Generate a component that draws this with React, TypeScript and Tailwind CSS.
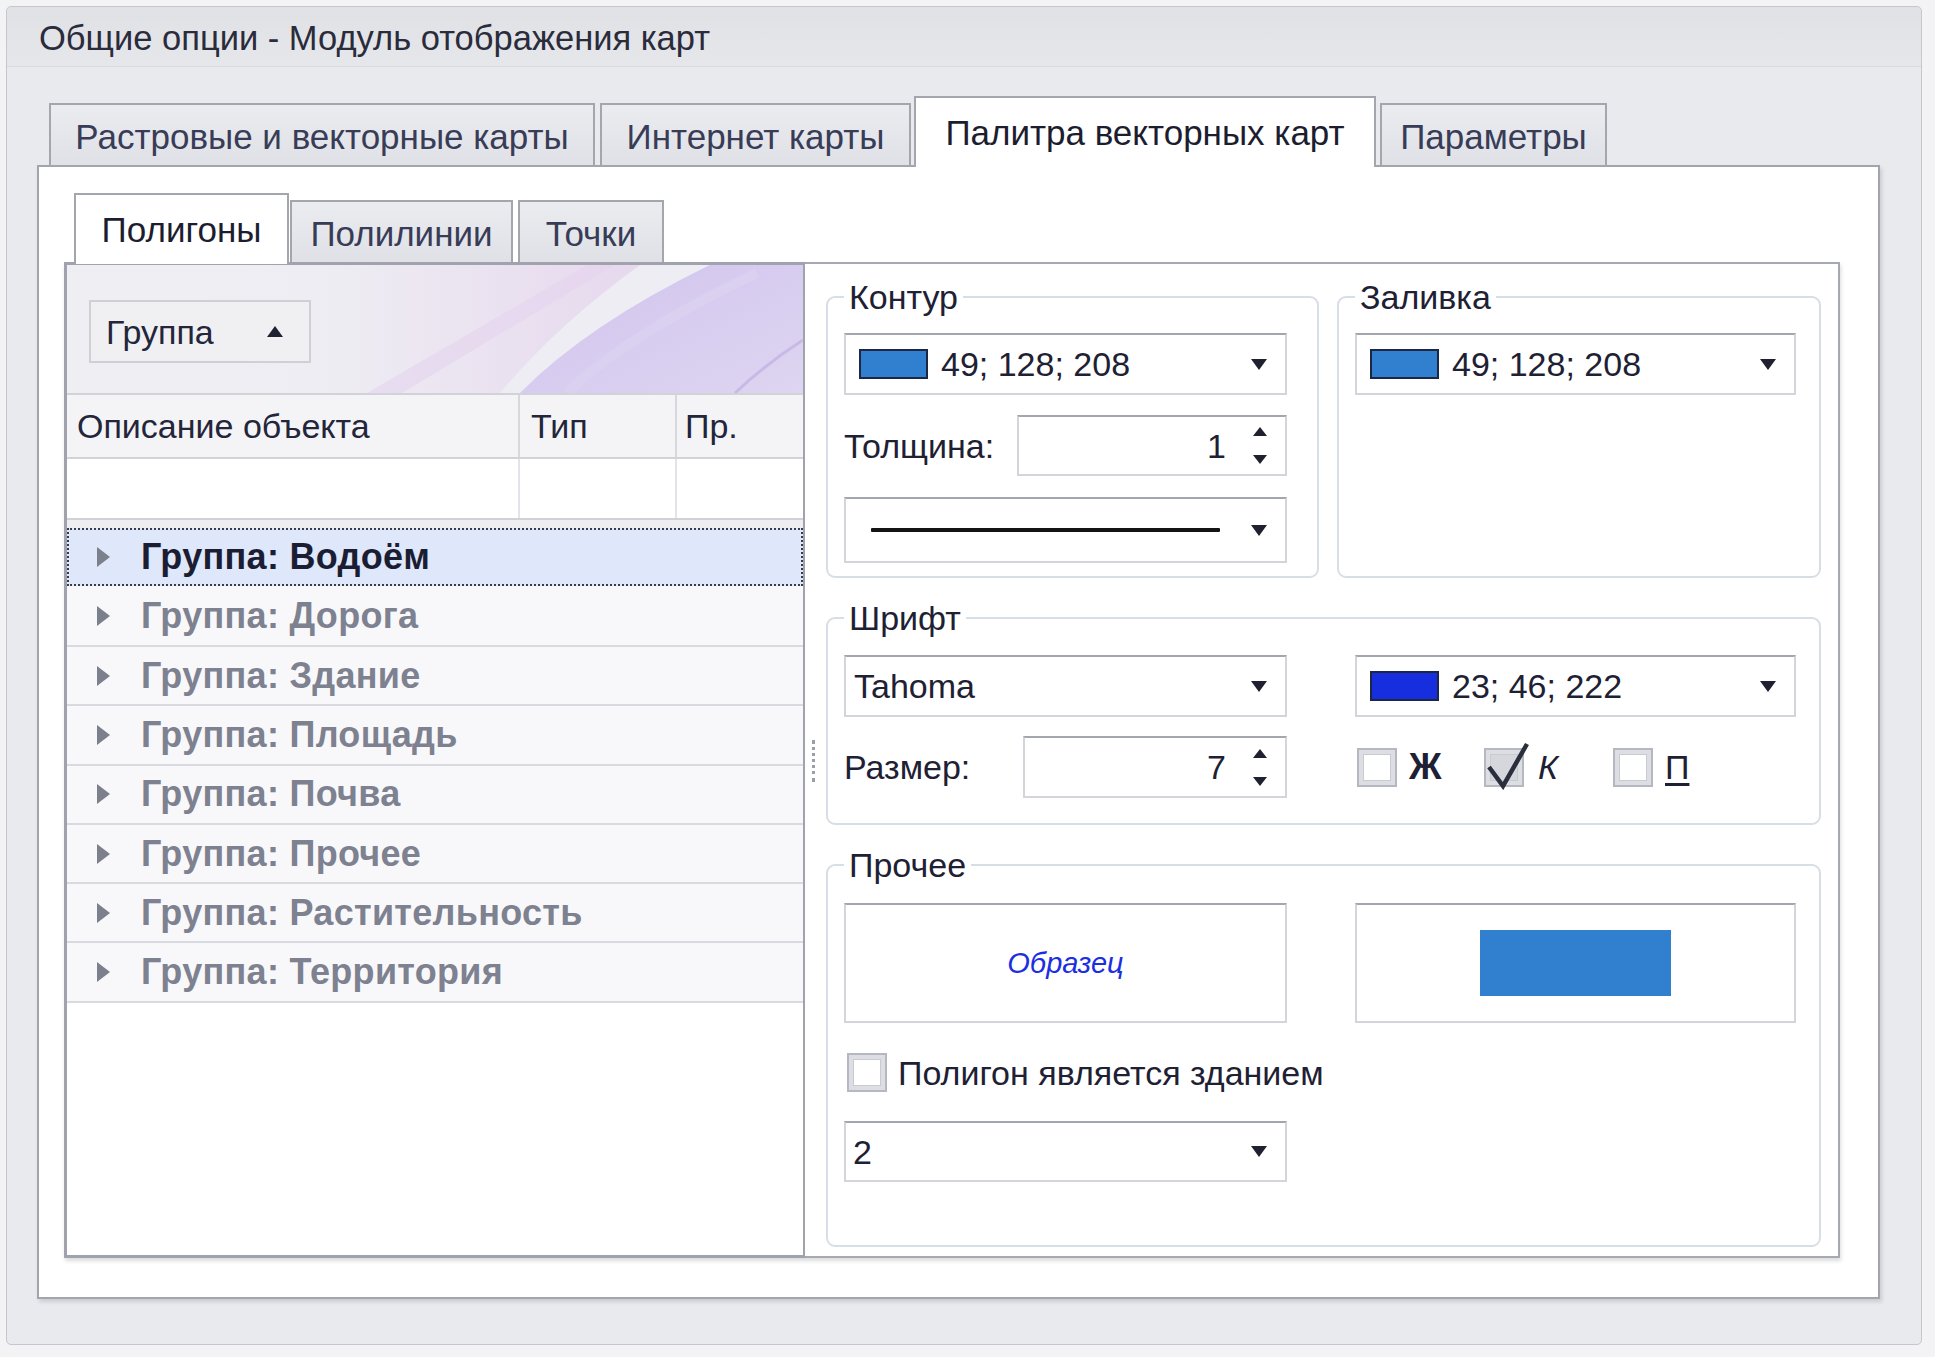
import React from 'react';

// Общие опции — Модуль отображения карт, вкладка «Палитра векторных карт»

const GROUPS = ['Водоём', 'Дорога', 'Здание', 'Площадь', 'Почва', 'Прочее', 'Растительность', 'Территория'];

const DropArrow = () => (
  <svg width="16" height="11" viewBox="0 0 16 11" className="block shrink-0">
    <path d="M0 0H16L8 11Z" fill="#1f2130" />
  </svg>
);

const SpinArrow: React.FC<{ up?: boolean }> = ({ up }) => (
  <svg width="14" height="9" viewBox="0 0 14 9" className="block">
    <path d={up ? 'M7 0L14 9H0Z' : 'M0 0H14L7 9Z'} fill="#1f2130" />
  </svg>
);

const Combo: React.FC<{ className: string; children?: React.ReactNode }> = ({ className, children }) => (
  <div className={`flex items-center border-2 border-[#d3d5db] border-t-[#a3a6ae] bg-white pr-[18px] ${className}`}>
    <div className="flex-1 flex items-center min-w-0">{children}</div>
    <DropArrow />
  </div>
);

const ColorValue: React.FC<{ swatch: string; text: string }> = ({ swatch, text }) => (
  <>
    <span className={`w-[69px] h-[30px] border-2 border-[#1c2745] ml-[13px] shrink-0 ${swatch}`} />
    <span className="ml-[13px]">{text}</span>
  </>
);

const Spin: React.FC<{ className: string; value: string }> = ({ className, value }) => (
  <div className={`flex items-center justify-end border-2 border-[#d3d5db] border-t-[#a3a6ae] bg-white ${className}`}>
    <span>{value}</span>
    <div className="flex flex-col gap-[19px] ml-[27px] mr-[18px]">
      <SpinArrow up />
      <SpinArrow />
    </div>
  </div>
);

const CheckBox: React.FC<{ checked?: boolean }> = ({ checked }) => (
  <div className="relative w-[40px] h-[39px] shrink-0 border-2 border-[#b5b8c0] bg-[#dcdee3] p-[4px]">
    <div className={`w-full h-full border border-[#c8cbd1] ${checked ? 'bg-[#d5d7dc]' : 'bg-white'}`} />
    {checked && (
      <svg width="48" height="50" viewBox="0 0 48 50" className="absolute left-[-2px] top-[-10px]">
        <path d="M5 27 L19 46 L43 4" stroke="#2b2e3d" strokeWidth="4.5" fill="none" strokeLinejoin="miter" />
      </svg>
    )}
  </div>
);

const Box: React.FC<{ className: string; children?: React.ReactNode }> = ({ className, children }) => (
  <div className={`flex items-center justify-center border-2 border-[#d3d5db] border-t-[#a3a6ae] bg-white ${className}`}>
    {children}
  </div>
);

const GroupBox: React.FC<{ title: string; className: string; children?: React.ReactNode }> = ({ title, className, children }) => (
  <fieldset className={`border-2 border-[#d7dee5] rounded-[9px] px-[16px] ${className}`}>
    <legend className="px-[5px] leading-[40px]">{title}</legend>
    {children}
  </fieldset>
);

const GroupPanelArt = () => (
  <svg width="736" height="128" viewBox="0 0 736 128" className="absolute inset-0">
    <defs>
      <linearGradient id="gp-base" x1="0" y1="0" x2="1" y2="0">
        <stop offset="0" stopColor="#efeff3" />
        <stop offset="0.35" stopColor="#eeedf3" />
        <stop offset="0.6" stopColor="#eae1f0" />
        <stop offset="0.8" stopColor="#e6d7ee" />
      </linearGradient>
      <linearGradient id="gp-purple" x1="0" y1="0" x2="1" y2="1">
        <stop offset="0" stopColor="#c9bbe8" />
        <stop offset="0.4" stopColor="#d6cbef" />
        <stop offset="1" stopColor="#ddd5f1" />
      </linearGradient>
    </defs>
    <rect width="736" height="128" fill="url(#gp-base)" />
    <path d="M300 128 L520 0 L548 0 L335 128Z" fill="#e5d4ee" opacity="0.6" />
    <path d="M433 128 Q490 60 573 0 L643 0 Q520 60 453 128 Z" fill="#ededf3" />
    <path d="M453 128 Q520 60 643 0 L736 0 L736 128 Z" fill="url(#gp-purple)" />
    <path d="M500 128 Q560 70 690 8" stroke="#dcd3f1" strokeWidth="10" fill="none" opacity="0.6" />
    <path d="M668 128 Q700 98 736 75" stroke="#c8b9e7" strokeWidth="3" fill="none" />
  </svg>
);

const tabIdle =
  'h-[62px] border-2 border-b-0 border-[#a4a6ae] bg-gradient-to-b from-[#ebecf0] to-[#e0e1e6] flex items-center justify-center pt-[3px] text-[#383c57] text-[35px]';

export default function App() {
  return (
    <div className="w-[1935px] h-[1357px] overflow-hidden bg-[#f3f3f5] pl-[6px] pt-[6px] font-['Liberation_Sans',Arial,sans-serif] text-[34px] leading-none text-[#1e2133]">
      <div className="w-[1916px] h-[1339px] rounded-[5px] border border-[#c6c7cd] bg-[#e9eaee] flex flex-col">
        {/* заголовок */}
        <div className="h-[60px] shrink-0 bg-gradient-to-b from-[#e0e1e5] to-[#e6e7eb] border-b border-[#d8d9de] flex items-center pl-[32px] pt-[4px] text-[34.5px] text-[#2a2c3b] rounded-t-[5px]">
          Общие опции - Модуль отображения карт
        </div>

        <div className="pl-[30px] pt-[29px]">
          {/* вкладки верхнего уровня */}
          <div className="flex items-end h-[69px]">
            <div className={`ml-[12px] w-[546px] ${tabIdle}`}>Растровые и векторные карты</div>
            <div className={`ml-[5px] w-[311px] ${tabIdle}`}>Интернет карты</div>
            <div className="relative z-10 ml-[3px] mb-[-2px] w-[462px] h-[71px] border-2 border-b-0 border-[#a4a6ae] bg-white flex items-center justify-center text-[35px] text-[#1c1e30]">
              Палитра векторных карт
            </div>
            <div className={`ml-[4px] w-[227px] ${tabIdle}`}>Параметры</div>
          </div>

          {/* содержимое вкладки */}
          <div className="w-[1843px] h-[1134px] border-2 border-[#a2a5ad] bg-white shadow-[2px_3px_4px_rgba(0,0,0,0.13)] pl-[25px] pt-[26px]">
            <div className="flex items-end h-[69px] pl-[10px]">
              <div className="relative z-10 w-[215px] h-[71px] mb-[-2px] border-2 border-b-0 border-[#a4a6ae] bg-white flex items-center justify-center text-[35px] text-[#1c1e30]">
                Полигоны
              </div>
              <div className={`ml-[1px] w-[223px] ${tabIdle}`}>Полилинии</div>
              <div className={`ml-[5px] w-[146px] ${tabIdle}`}>Точки</div>
            </div>

            <div className="flex w-[1776px] h-[996px] shadow-[1px_3px_4px_rgba(0,0,0,0.14)]">
              {/* таблица групп */}
              <div className="w-[741px] h-full border-[3px] border-r-2 border-[#a0a3ad] bg-white flex flex-col">
                <div className="relative h-[128px] shrink-0 overflow-hidden">
                  <GroupPanelArt />
                  <div className="relative ml-[22px] mt-[35px] w-[222px] h-[63px] border-2 border-[#cfd0d6] bg-[#f0f0f3] flex items-center pl-[15px] pr-[26px] text-[#23263a]">
                    <span className="flex-1">Группа</span>
                    <svg width="16" height="11" viewBox="0 0 16 11" className="block">
                      <path d="M8 0L16 11H0Z" fill="#1f2130" />
                    </svg>
                  </div>
                </div>
                <div className="h-[66px] shrink-0 flex border-y-2 border-[#d2d3d9] bg-[#f4f4f7] text-[#23263a]">
                  <div className="w-[453px] border-r-2 border-[#d7d8dd] flex items-center pl-[10px]">Описание объекта</div>
                  <div className="w-[157px] border-r-2 border-[#d7d8dd] flex items-center pl-[11px]">Тип</div>
                  <div className="flex-1 flex items-center pl-[8px]">Пр.</div>
                </div>
                <div className="h-[59px] shrink-0 flex">
                  <div className="w-[453px] border-r-2 border-[#e3e4e9]" />
                  <div className="w-[157px] border-r-2 border-[#e3e4e9]" />
                  <div className="flex-1" />
                </div>
                <div className="h-[10px] shrink-0 border-t-2 border-[#d0d1d7] bg-[#eeeef1]" />
                {GROUPS.map((g, i) =>
                  i === 0 ? (
                    <div key={g} className="h-[58px] shrink-0 flex items-center border-2 border-dotted border-[#3a3c48] bg-[#dfe7fb] font-bold text-[36px] tracking-[0.3px] text-[#1b1e33]">
                      <svg width="13" height="20" viewBox="0 0 13 20" className="block ml-[28px] mr-[31px]">
                        <path d="M0 0L13 10L0 20Z" fill="#7c808d" />
                      </svg>
                      <span>Группа: {g}</span>
                    </div>
                  ) : (
                    <div
                      key={g}
                      className={`${i === 1 ? 'h-[61px]' : 'h-[59.3px]'} shrink-0 flex items-center border-b-2 border-[#d9dadf] bg-[#f8f8fa] font-bold text-[36px] tracking-[0.3px] text-[#7d8190]`}
                    >
                      <svg width="13" height="20" viewBox="0 0 13 20" className="block ml-[30px] mr-[31px]">
                        <path d="M0 0L13 10L0 20Z" fill="#7c808d" />
                      </svg>
                      <span>Группа: {g}</span>
                    </div>
                  )
                )}
                <div className="flex-1" />
              </div>

              {/* свойства */}
              <div className="relative flex-1 h-full border-2 border-l-0 border-[#a6a9b1] bg-white pl-[21px] pt-[13px]">
                <div className="absolute left-[7px] top-[476px] h-[42px] border-l-[3px] border-dotted border-[#9c9ea8]" />

                <div className="flex gap-[18px]">
                  <GroupBox title="Контур" className="w-[493px] h-[301px]">
                    <Combo className="mt-[16px] w-[443px] h-[62px]">
                      <ColorValue swatch="bg-[#3180d0]" text="49; 128; 208" />
                    </Combo>
                    <div className="mt-[20px] flex items-center">
                      <span className="w-[173px]">Толщина:</span>
                      <Spin className="w-[270px] h-[61px]" value="1" />
                    </div>
                    <Combo className="mt-[21px] w-[443px] h-[66px]">
                      <span className="ml-[25px] w-[349px] h-[4px] bg-[#141414] rounded-[1px]" />
                    </Combo>
                  </GroupBox>
                  <GroupBox title="Заливка" className="w-[484px] h-[301px]">
                    <Combo className="mt-[16px] w-[441px] h-[62px]">
                      <ColorValue swatch="bg-[#3180d0]" text="49; 128; 208" />
                    </Combo>
                  </GroupBox>
                </div>

                <GroupBox title="Шрифт" className="mt-[20px] w-[995px] h-[227px]">
                  <div className="mt-[17px] flex">
                    <Combo className="w-[443px] h-[62px]">
                      <span className="ml-[8px]">Tahoma</span>
                    </Combo>
                    <Combo className="ml-[68px] w-[441px] h-[62px]">
                      <ColorValue swatch="bg-[#172ede]" text="23; 46; 222" />
                    </Combo>
                  </div>
                  <div className="mt-[19px] flex items-center">
                    <span className="w-[179px]">Размер:</span>
                    <Spin className="w-[264px] h-[62px]" value="7" />
                    <div className="ml-[70px] w-[127px] flex items-center">
                      <CheckBox />
                      <span className="ml-[12px] font-bold text-[36px]">Ж</span>
                    </div>
                    <div className="w-[129px] flex items-center">
                      <CheckBox checked />
                      <span className="ml-[14px] italic">К</span>
                    </div>
                    <div className="flex items-center">
                      <CheckBox />
                      <span className="ml-[12px] underline underline-offset-[4px]">П</span>
                    </div>
                  </div>
                </GroupBox>

                <GroupBox title="Прочее" className="mt-[20px] w-[995px] h-[402px]">
                  <div className="mt-[18px] flex">
                    <Box className="w-[443px] h-[120px]">
                      <span className="italic text-[29px] text-[#1b2fe0]">Образец</span>
                    </Box>
                    <Box className="ml-[68px] w-[441px] h-[120px]">
                      <span className="w-[191px] h-[66px] bg-[#3180d0]" />
                    </Box>
                  </div>
                  <div className="mt-[30px] ml-[3px] flex items-center">
                    <CheckBox />
                    <span className="ml-[11px]">Полигон является зданием</span>
                  </div>
                  <Combo className="mt-[29px] w-[443px] h-[61px]">
                    <span className="ml-[7px]">2</span>
                  </Combo>
                </GroupBox>
              </div>
            </div>
          </div>
        </div>
      </div>
    </div>
  );
}
